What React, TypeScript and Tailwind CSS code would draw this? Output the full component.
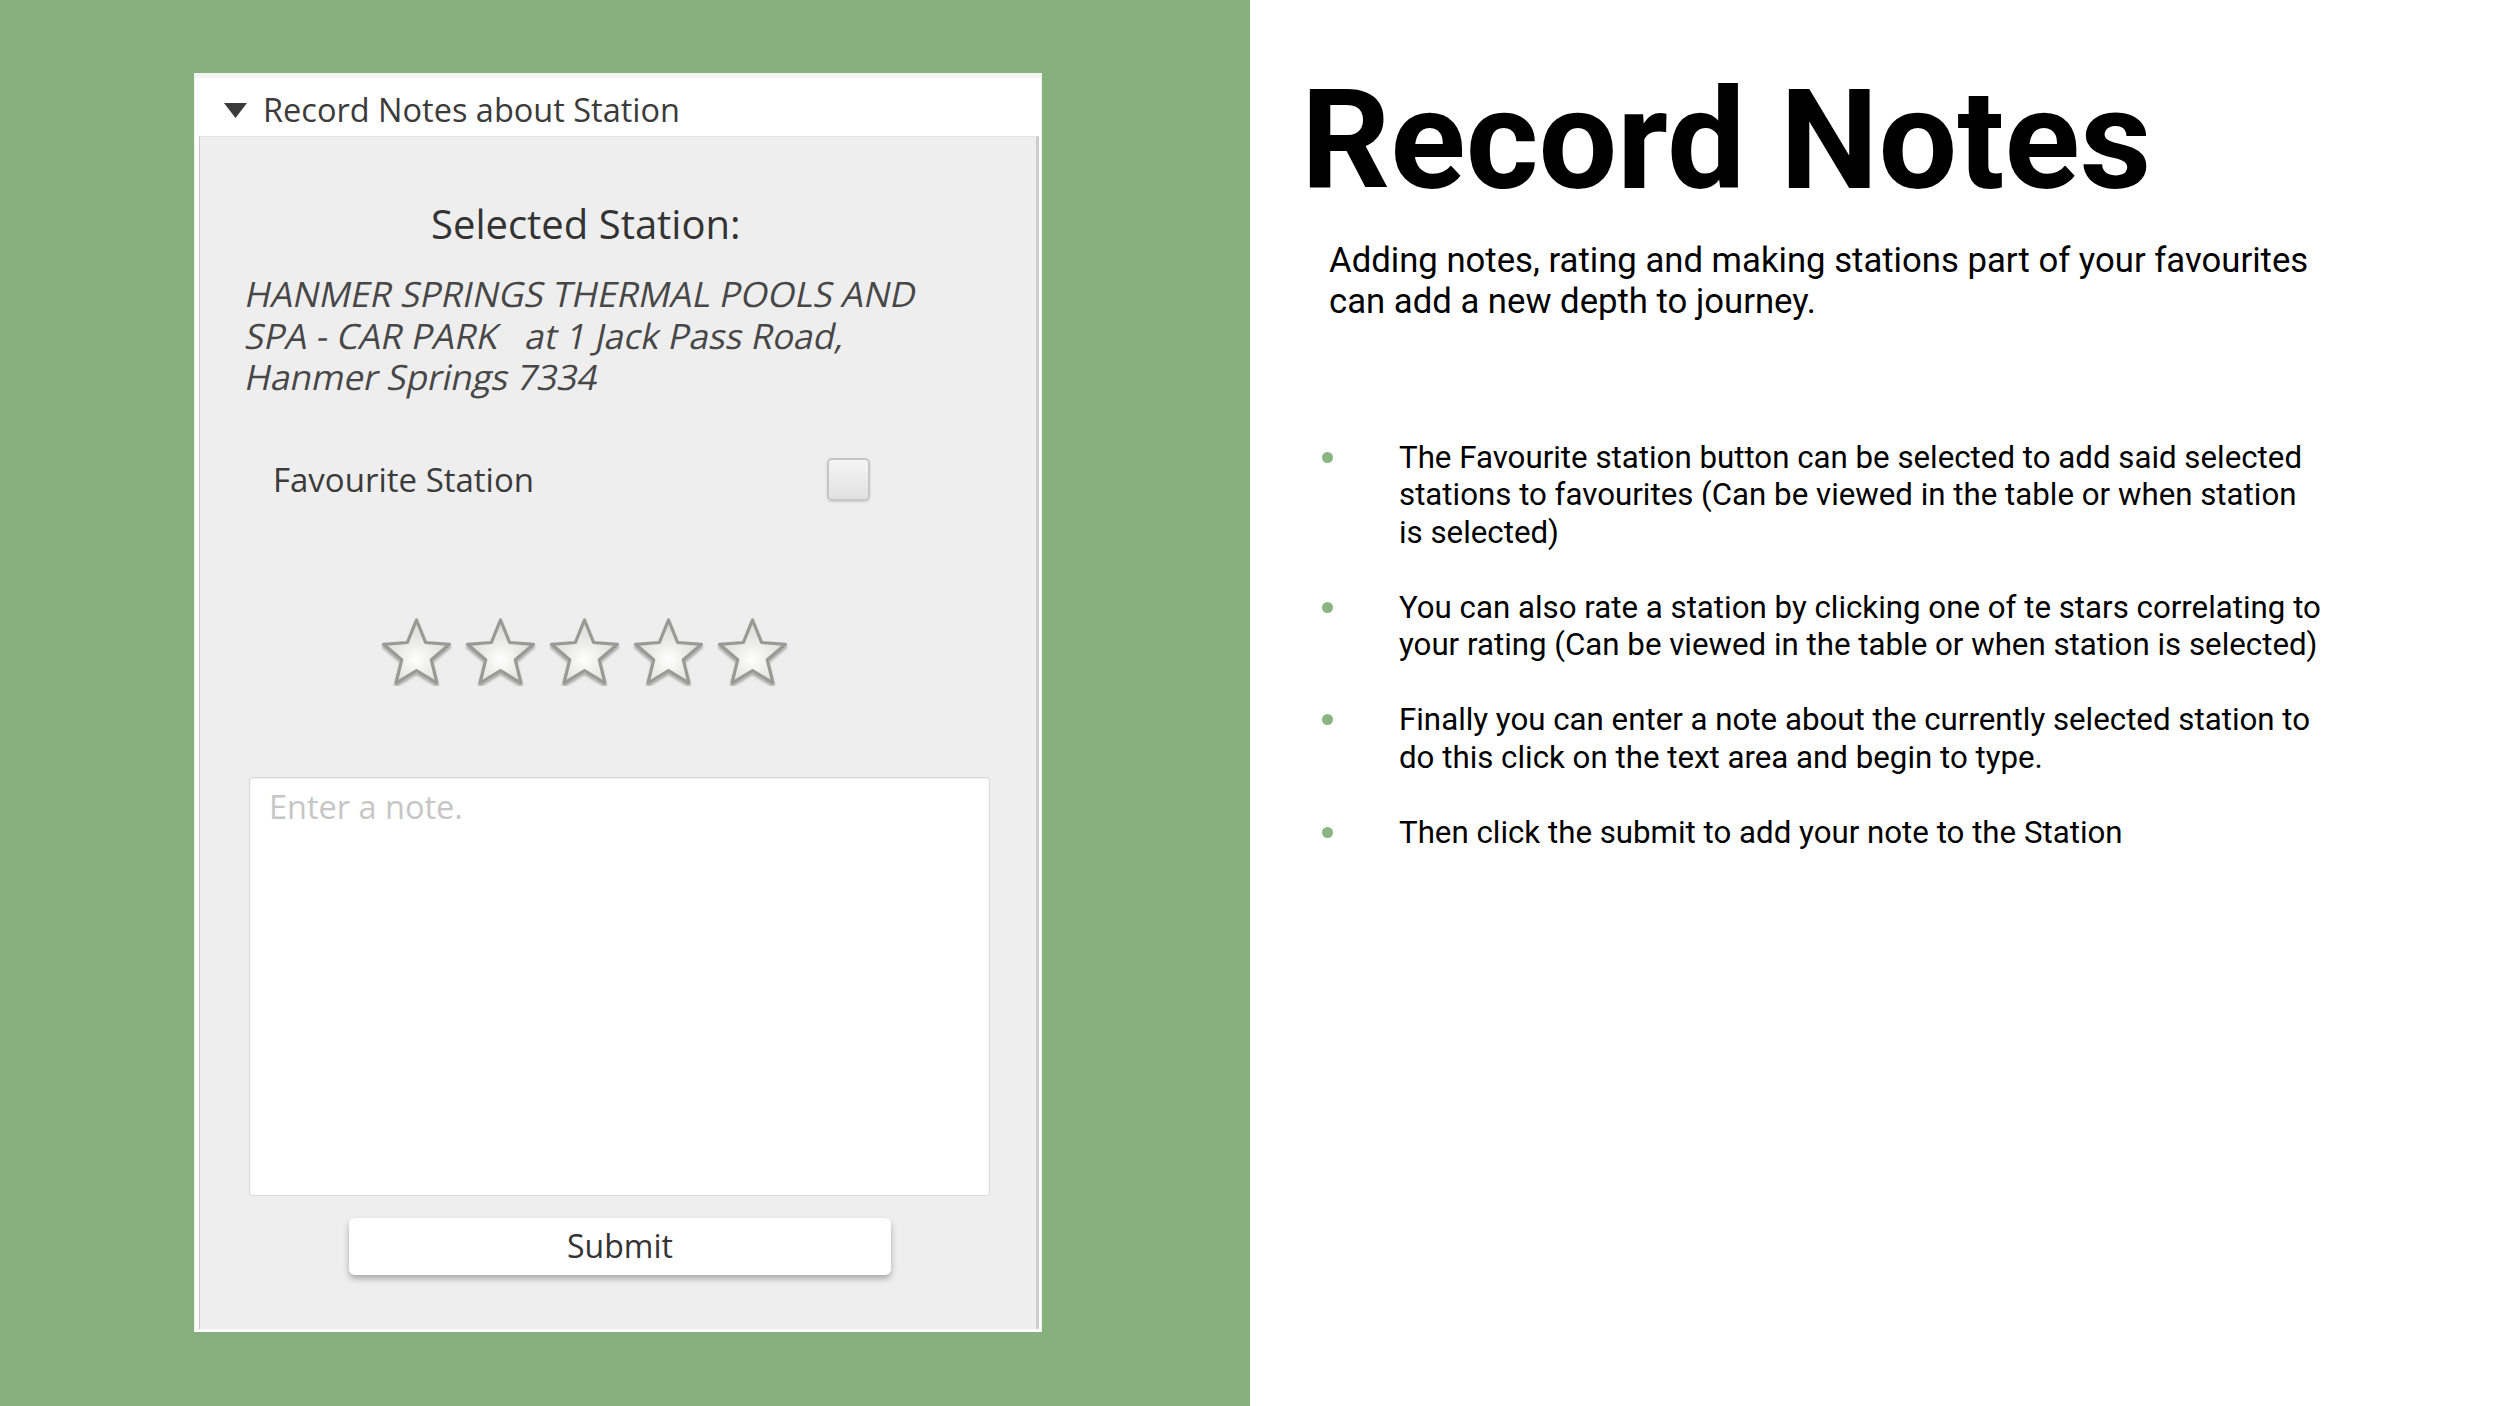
import React from 'react';

const open = "font-['Open_Sans','DejaVu_Sans',sans-serif]";

function Star({ id }: { id: number }) {
  return (
    <svg width="73" height="70" viewBox="0 0 73 70">
      <defs>
        <radialGradient id={`sf${id}`} cx="50%" cy="62%" r="55%">
          <stop offset="0%" stopColor="#ffffff" />
          <stop offset="55%" stopColor="#e9e9e7" />
          <stop offset="100%" stopColor="#dcdcda" />
        </radialGradient>
        <filter id={`ss${id}`} x="-10%" y="-10%" width="120%" height="130%">
          <feDropShadow dx="0" dy="2.5" stdDeviation="1.3" floodColor="#000" floodOpacity="0.3" />
        </filter>
      </defs>
      <polygon
        points="36.5,4 45.6,26.5 69.5,28.3 51.3,43.8 57,67 36.5,54.5 16,67 21.7,43.8 3.5,28.3 27.4,26.5"
        fill={`url(#sf${id})`}
        stroke="#999995"
        strokeWidth="3.2"
        strokeLinejoin="round"
        filter={`url(#ss${id})`}
      />
    </svg>
  );
}

const stationLines = ['HANMER SPRINGS THERMAL POOLS AND', 'SPA - CAR PARK   at 1 Jack Pass Road,', 'Hanmer Springs 7334'];

function NotesPanel() {
  return (
    <div className="w-[848px] h-[1259px] bg-white border-t-[5px] border-[#f3f3f3] border-x border-x-[#f0f0f0] flex flex-col">
      {/* header */}
      <div className="h-[58px] flex items-center pl-[29px] pt-[6px] shrink-0">
        <svg width="23" height="15" viewBox="0 0 23 15">
          <polygon points="0,0 23,0 11.5,15" fill="#3a3a3a" />
        </svg>
        <span className={`${open} ml-[16px] text-[32.5px] leading-none text-[#3b3b3b]`}>
          Record Notes about Station
        </span>
      </div>

      {/* body */}
      <div className="flex-1 ml-[4px] mr-[2px] mb-[3px] bg-[#eeeeee] border-l border-l-[#cbc4d0] border-r-[3px] border-r-[#cdcdcd] border-t border-t-[#e2e2e2] flex flex-col">
        <div className={`${open} mt-[63px] pl-[231px] text-[40px] leading-[48px] text-[#333]`}>
          Selected Station:
        </div>

        <div className={`${open} mt-[25px] pl-[42px] text-[35px] leading-[41.5px] text-[#474747]`}>
          {stationLines.map((l, i) => (
            <div key={i} className="whitespace-pre -skew-x-12 origin-bottom-left">
              {l}
            </div>
          ))}
        </div>

        <div className="mt-[60px] h-[43px] flex items-center pl-[73px]">
          <span className={`${open} w-[554px] text-[33px] leading-none text-[#3b3b3b]`}>Favourite Station</span>
          <div className="w-[43px] h-[43px] rounded-[5px] border-2 border-[#c6c6c6] bg-linear-to-b from-[#f5f5f5] to-[#e1e1e1] shadow-[0_1px_2px_rgba(0,0,0,0.15)]" />
        </div>

        <div className="mt-[115px] pl-[180px] flex gap-[11px]">
          {[0, 1, 2, 3, 4].map((i) => (
            <Star key={i} id={i} />
          ))}
        </div>

        <div className="mt-[91px] ml-[49px] w-[741px] h-[419px] bg-white border border-[#d9d9d9] rounded-[3px] shadow-[inset_0_1px_2px_rgba(0,0,0,0.08)] pl-[19px] pt-[5px]">
          <span className={`${open} text-[32.5px] text-[#c6c6c6]`}>Enter a note.</span>
        </div>

        <div className="mt-[22px] ml-[149px] w-[542px] h-[57px] bg-white rounded-[6px] shadow-[0_4px_6px_rgba(0,0,0,0.28)] flex items-center justify-center">
          <span className={`${open} text-[32px] leading-none text-[#333]`}>Submit</span>
        </div>
      </div>
    </div>
  );
}

const bullets: string[][] = [
  [
    'The Favourite station button can be selected to add said selected',
    'stations to favourites (Can be viewed in the table or when station',
    'is selected)',
  ],
  [
    'You can also rate a station by clicking one of te stars correlating to',
    'your rating (Can be viewed in the table or when station is selected)',
  ],
  [
    'Finally you can enter a note about the currently selected station to',
    'do this click on the text area and begin to type.',
  ],
  ['Then click the submit to add your note to the Station'],
];

export default function App() {
  return (
    <div className="w-[2500px] h-[1406px] flex bg-white overflow-hidden">
      <div className="w-[1250px] h-full bg-[#87b07f] pl-[194px] pt-[73px] shrink-0">
        <NotesPanel />
      </div>

      <div className="flex-1 pl-[51px] pt-[71px] font-['Roboto',sans-serif] text-black">
        <h1 className="text-[139.5px] leading-none font-bold">Record Notes</h1>

        <p className="mt-[29px] ml-[28px] text-[34.7px] leading-[41.6px]">
          Adding notes, rating and making stations part of your favourites
          <br />
          can add a new depth to journey.
        </p>

        <ul className="mt-[116px] ml-[21px]">
          {bullets.map((lines, i) => (
            <li key={i} className={`flex items-start ${i > 0 ? 'mt-[37.5px]' : ''}`}>
              <div className="h-[37.5px] flex items-center shrink-0">
                <div className="w-[11px] h-[11px] rounded-full bg-[#8ab583]" />
              </div>
              <div className="ml-[66px] text-[31.25px] leading-[37.5px]">
                {lines.map((l, j) => (
                  <div key={j}>{l}</div>
                ))}
              </div>
            </li>
          ))}
        </ul>
      </div>
    </div>
  );
}
